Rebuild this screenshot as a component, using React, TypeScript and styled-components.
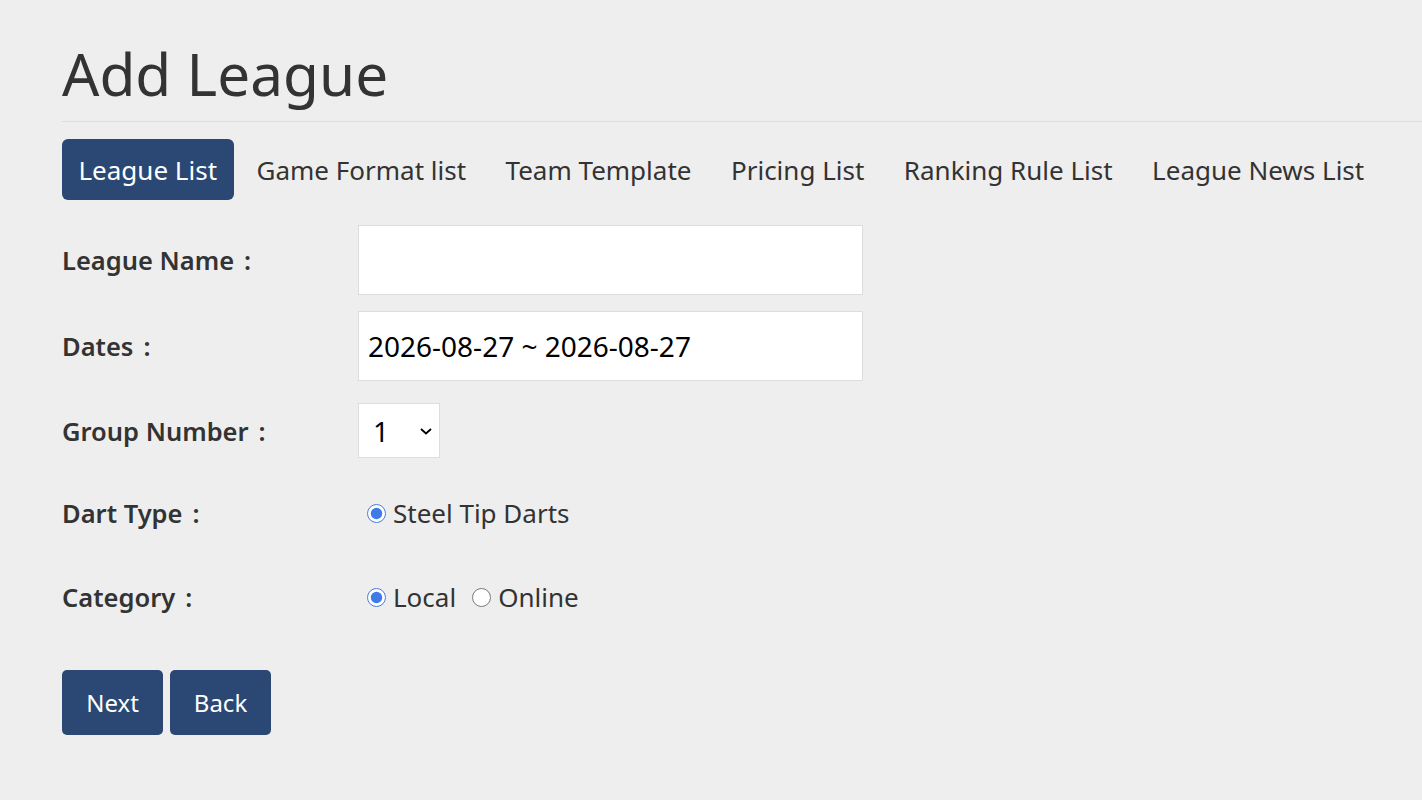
import styled, { createGlobalStyle } from 'styled-components';

const GlobalStyle = createGlobalStyle`
  html, body {
    margin: 0;
    padding: 0;
    background: #eeeeee;
  }
  body {
    font-family: 'Noto Sans', 'Noto Sans CJK TC', sans-serif;
    color: #333333;
  }
`;

const Page = styled.div`
  padding: 33px 0 60px 62px;
`;

const Title = styled.h1`
  margin: 0;
  font-size: 58.5px;
  font-weight: 400;
  line-height: 80px;
  color: #333333;
`;

const Divider = styled.hr`
  margin: 8px 0 17px;
  border: 0;
  border-top: 1px solid #dddddd;
`;

const Tabs = styled.nav`
  display: flex;
  gap: 6.5px;
  margin-bottom: 25px;
`;

const Tab = styled.a<{ $active?: boolean }>`
  display: flex;
  align-items: center;
  height: 61px;
  padding: 0 16.5px;
  border-radius: 6px;
  font-size: 26px;
  color: ${(p) => (p.$active ? '#ffffff' : '#333333')};
  background: ${(p) => (p.$active ? '#2a4873' : 'transparent')};
  text-decoration: none;
  cursor: pointer;
`;

const Form = styled.form`
  display: flex;
  flex-direction: column;
`;

const Row = styled.div<{ $height: number; $gap: number }>`
  display: flex;
  align-items: center;
  height: ${(p) => p.$height}px;
  margin-bottom: ${(p) => p.$gap}px;
`;

const Label = styled.label`
  width: 296px;
  flex-shrink: 0;
  font-size: 25.5px;
  font-weight: 600;
  color: #333333;
`;

const Colon = styled.span`
  margin-left: 10px;
`;

const TextInput = styled.input`
  box-sizing: border-box;
  width: 505px;
  height: 70px;
  padding: 0 9px;
  border: 1px solid #dddddd;
  background: #ffffff;
  font-family: inherit;
  font-size: 28px;
  color: #000000;
  outline: none;
`;

const SelectWrap = styled.div`
  position: relative;
  width: 82px;
  height: 55px;
`;

const Select = styled.select`
  box-sizing: border-box;
  width: 100%;
  height: 100%;
  padding: 0 0 0 14px;
  border: 1px solid #dddddd;
  background: #ffffff;
  font-family: inherit;
  font-size: 28px;
  color: #000000;
  appearance: none;
  outline: none;
`;

const Chevron = styled.svg`
  position: absolute;
  right: 7px;
  top: 50%;
  margin-top: -5px;
  pointer-events: none;
`;

const Options = styled.div`
  display: flex;
  align-items: center;
  padding-left: 9px;
  gap: 16px;
`;

const Option = styled.label`
  display: flex;
  align-items: center;
  gap: 7px;
  font-size: 26px;
  color: #333333;
`;

const Radio = styled.input`
  width: 19px;
  height: 19px;
  margin: 0;
  accent-color: #3f7be8;
`;

const Actions = styled.div`
  display: flex;
  gap: 7px;
`;

const Button = styled.button`
  width: 101px;
  height: 65px;
  border: 0;
  border-radius: 5px;
  background: #2a4873;
  color: #ffffff;
  font-family: inherit;
  font-size: 24px;
  cursor: pointer;
`;

const tabs = [
  'League List',
  'Game Format list',
  'Team Template',
  'Pricing List',
  'Ranking Rule List',
  'League News List',
];

export default function App() {
  return (
    <>
      <GlobalStyle />
      <Page>
        <Title>Add League</Title>
        <Divider />
        <Tabs>
          {tabs.map((t, i) => (
            <Tab key={t} $active={i === 0}>
              {t}
            </Tab>
          ))}
        </Tabs>
        <Form onSubmit={(e) => e.preventDefault()}>
          <Row $height={70} $gap={16}>
            <Label>
              League Name<Colon>:</Colon>
            </Label>
            <TextInput type="text" />
          </Row>
          <Row $height={70} $gap={22}>
            <Label>
              Dates<Colon>:</Colon>
            </Label>
            <TextInput type="text" defaultValue="2026-08-27 ~ 2026-08-27" />
          </Row>
          <Row $height={55} $gap={24}>
            <Label>
              Group Number<Colon>:</Colon>
            </Label>
            <SelectWrap>
              <Select defaultValue="1">
                <option value="1">1</option>
                <option value="2">2</option>
                <option value="3">3</option>
                <option value="4">4</option>
              </Select>
              <Chevron width="14" height="10" viewBox="0 0 14 10">
                <path d="M2 3l5 4.5L12 3" fill="none" stroke="#000" strokeWidth="1.8" />
              </Chevron>
            </SelectWrap>
          </Row>
          <Row $height={62} $gap={22}>
            <Label>
              Dart Type<Colon>:</Colon>
            </Label>
            <Options>
              <Option>
                <Radio type="radio" name="dart" defaultChecked />
                Steel Tip Darts
              </Option>
            </Options>
          </Row>
          <Row $height={62} $gap={42}>
            <Label>
              Category<Colon>:</Colon>
            </Label>
            <Options>
              <Option>
                <Radio type="radio" name="category" defaultChecked />
                Local
              </Option>
              <Option>
                <Radio type="radio" name="category" />
                Online
              </Option>
            </Options>
          </Row>
          <Actions>
            <Button type="button">Next</Button>
            <Button type="button">Back</Button>
          </Actions>
        </Form>
      </Page>
    </>
  );
}
